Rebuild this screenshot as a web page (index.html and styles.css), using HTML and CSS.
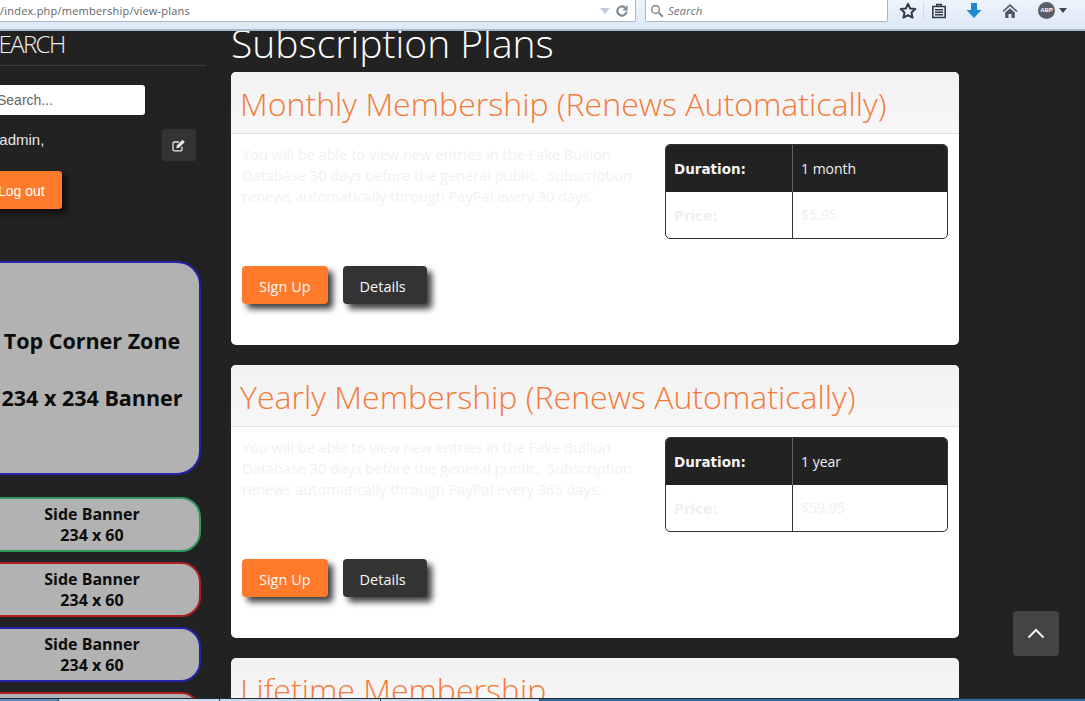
FILE: index.html
```html
<!DOCTYPE html>
<html lang="en">
<head>
<meta charset="utf-8">
<title>Subscription Plans</title>
<link rel="stylesheet" href="styles.css">
</head>
<body>
<header class="toolbar">
  <div class="urlbar">
    <span class="url">/index.php/membership/view-plans</span>
    <svg class="ico-drop" width="12" height="8" viewBox="0 0 12 8"><path d="M1 1h10L6 7z" fill="#c3cdd8"/></svg>
    <svg class="ico-reload" width="14" height="14" viewBox="0 0 14 14"><path d="M11.500 7.500A4.600 4.600 0 1 1 10 3.600" fill="none" stroke="#7d8a96" stroke-width="2.200"/><path d="M12.600 1v5.400H7.400z" fill="#7d8a96"/></svg>
  </div>
  <div class="searchbar">
    <svg width="14" height="14" viewBox="0 0 14 14"><circle cx="5.500" cy="5.500" r="3.900" fill="none" stroke="#8a929a" stroke-width="1.600"/><path d="M8.500 8.500l4.300 4.300" stroke="#8a929a" stroke-width="2.200"/></svg>
    <span class="search-label">Search</span>
  </div>
  <div class="tools">
    <svg class="tool-star" width="18" height="18" viewBox="0 0 18 18"><path d="M9 1.800l2.200 4.700 5.100.6-3.800 3.500 1 5.100L9 13.200l-4.500 2.500 1-5.100L1.700 7.100l5.100-.6z" fill="none" stroke="#2f3d4a" stroke-width="2" stroke-linejoin="round"/></svg>
    <span class="tool-sep"></span>
    <svg class="tool-list" width="16" height="16" viewBox="0 0 16 16"><path d="M1.800 3.500h12.400V14.500H1.800zM5.800 3.500V1.500h4.400v2" fill="none" stroke="#2f3d4a" stroke-width="1.600"/><path d="M4 6.800h8M4 9.300h8M4 11.800h8" stroke="#2f3d4a" stroke-width="1.400"/></svg>
    <svg class="tool-down" width="16" height="16" viewBox="0 0 16 16"><path d="M5 0h6v7h4.500L8 15 .5 7H5z" fill="#1b8ad3"/></svg>
    <svg class="tool-home" width="16" height="16" viewBox="0 0 16 16"><path d="M8 1L.5 8l1 1L8 3.200 14.500 9l1-1zM3.200 9.500L8 5.200l4.800 4.300V15H9.500v-4h-3v4H3.200z" fill="#4d5964"/></svg>
    <div class="abp"><span class="abp-badge">ABP</span><svg width="8" height="5" viewBox="0 0 8 5"><path d="M0 0h8L4 5z" fill="#3c4a57"/></svg></div>
  </div>
</header>

<div class="page">
  <aside class="sidebar">
    <h3 class="side-title">SEARCH</h3>
    <input class="side-search" type="text" placeholder="Search...">
    <div class="user-row">
      <span class="hello">Hello admin,</span>
      <a class="edit-btn"><svg width="14" height="13" viewBox="0 0 14 13"><path d="M10 7.800V10.500a1.300 1.300 0 0 1-1.300 1.300H2.300A1.300 1.300 0 0 1 1 10.500V4.300A1.300 1.300 0 0 1 2.300 3H7" fill="none" stroke="#e6e6e6" stroke-width="1.300"/><path d="M4.800 6.500L10.500 .8l2.300 2.300-5.700 5.700-2.800.5z" fill="#e6e6e6"/></svg></a>
    </div>
    <a class="logout">Log out</a>
    <div class="banner banner-top banner-blue"><span>Top Corner Zone</span><span>234 x 234 Banner</span></div>
    <div class="banner banner-side banner-green"><span>Side Banner</span><span>234 x 60</span></div>
    <div class="banner banner-side banner-red"><span>Side Banner</span><span>234 x 60</span></div>
    <div class="banner banner-side banner-blue"><span>Side Banner</span><span>234 x 60</span></div>
    <div class="banner banner-side banner-red"><span>Side Banner</span><span>234 x 60</span></div>
  </aside>

  <main class="content">
    <h1 class="page-title">Subscription Plans</h1>

    <section class="plan">
      <h2 class="plan-title">Monthly Membership (Renews Automatically)</h2>
      <div class="plan-body">
        <div class="plan-top">
          <p class="plan-text">You will be able to view new entries in the Fake Bullion Database 30 days before the general public.&nbsp; Subscription renews automatically through PayPal every 30 days.</p>
          <table class="plan-table">
            <tr class="row-dark"><th>Duration:</th><td>1 month</td></tr>
            <tr><th>Price:</th><td>$5.95</td></tr>
          </table>
        </div>
        <div class="plan-actions"><a class="btn btn-orange">Sign Up</a><a class="btn btn-dark">Details</a></div>
      </div>
    </section>

    <section class="plan">
      <h2 class="plan-title">Yearly Membership (Renews Automatically)</h2>
      <div class="plan-body">
        <div class="plan-top">
          <p class="plan-text">You will be able to view new entries in the Fake Bullion Database 30 days before the general public.&nbsp; Subscription renews automatically through PayPal every 365 days.</p>
          <table class="plan-table">
            <tr class="row-dark"><th>Duration:</th><td>1 year</td></tr>
            <tr><th>Price:</th><td>$59.95</td></tr>
          </table>
        </div>
        <div class="plan-actions"><a class="btn btn-orange">Sign Up</a><a class="btn btn-dark">Details</a></div>
      </div>
    </section>

    <section class="plan">
      <h2 class="plan-title">Lifetime Membership</h2>
    </section>
  </main>
</div>

<a class="to-top"><svg width="18" height="11" viewBox="0 0 18 11"><path d="M1.500 9.500L9 2l7.500 7.500" fill="none" stroke="#f2f2f2" stroke-width="2"/></svg></a>

<footer class="taskbar">
  <span class="task task-a"></span><span class="task task-b"></span><span class="task task-b"></span><span class="task task-c"></span><span class="task task-d"></span>
</footer>
</body>
</html>
```
FILE: styles.css
```css
* { box-sizing: border-box; }
html, body { margin: 0; height: 701px; overflow: hidden; }
body { background: #222; display: flex; flex-direction: column; font-family: "Open Sans", sans-serif; color: #f2f2f2; position: relative; }

/* Browser chrome */
.toolbar { height: 31px; flex: none; display: flex; align-items: flex-start; background: linear-gradient(#eef4fb, #dce8f6); border-bottom: 2px solid #a8b8c9; }
.urlbar { width: 636px; height: 22px; background: #fff; border-right: 1px solid #a9b9ca; border-bottom: 1px solid #a9b9ca; border-radius: 0 0 2px 0; display: flex; align-items: center; padding: 0 6px 0 0; }
.url { flex: 1; font-size: 11px; color: #5f6467; letter-spacing: .22px; }
.ico-drop { margin-right: 4px; }
.searchbar { width: 243px; height: 22px; margin-left: 9px; background: #fff; border: 1px solid #a9b9ca; border-top: 0; border-radius: 0 0 2px 2px; display: flex; align-items: center; gap: 4px; padding-left: 4px; }
.search-label { font-size: 11.500px; font-style: italic; color: #70767c; }
.tools { flex: 1; height: 21px; display: flex; align-items: center; padding-left: 11px; }
.tool-sep { width: 1px; height: 18px; margin-left: 6px; background: #cfdbe8; }
.tool-list { margin-left: 7px; }
.tool-down { margin-left: 19px; }
.tool-home { margin-left: 20px; }
.abp { display: flex; align-items: center; gap: 4px; margin-left: 20px; }
.abp-badge { width: 17px; height: 17px; border-radius: 50%; background: #595f66; color: #fff; font-family: "Liberation Sans", sans-serif; font-weight: 700; font-size: 6px; line-height: 17px; text-align: center; }

/* Page columns */
.page { flex: 1; min-height: 0; display: flex; align-items: flex-start; overflow: hidden; }
.sidebar { width: 231px; flex: none; overflow: hidden; height: 100%; }
.content { width: 728px; flex: none; }

/* Sidebar */
.side-title { margin: 0 0 0 -13px; width: 219px; height: 35px; border-bottom: 1px solid #3f3f3f; font-size: 24px; line-height: 26px; font-weight: 300; letter-spacing: -1.600px; color: #f0f0f0; }
.side-search { display: block; width: 165px; height: 30px; margin: 19px 0 0 -20px; padding: 0 17px; border: 0; border-radius: 3px; background: #fff; font-family: "Liberation Sans", sans-serif; font-size: 14px; }
.side-search::placeholder { color: #666; opacity: 1; }
.user-row { display: flex; width: 196px; height: 32px; margin-top: 14px; justify-content: space-between; }
.hello { margin-left: -39px; font-family: "Liberation Sans", sans-serif; font-size: 15px; line-height: 22px; color: #e8e8e8; white-space: nowrap; }
.edit-btn { width: 34px; height: 32px; background: #333; border-radius: 3px; display: flex; align-items: center; justify-content: center; }
.logout { display: block; width: 90px; height: 38px; margin: 10px 0 0 -28px; padding-left: 26px; background: #ff7a2b; border-radius: 3px; font-family: "Liberation Sans", sans-serif; font-size: 14px; line-height: 40px; color: #fff; box-shadow: 4px 4px 6px rgba(0,0,0,.7); }
.banner { width: 242px; margin-left: -41px; padding-left: 24px; background: #b2b2b2; border: 2px solid; color: #0c0c0c; font-family: "Open Sans", sans-serif; font-weight: 700; display: flex; flex-direction: column; align-items: center; }
.banner-top { height: 214px; margin-top: 52px; border-radius: 24px; font-size: 21.500px; justify-content: center; gap: 24px; line-height: 33px; padding-top: 2px; }
.banner-side { height: 55px; margin-top: 10px; border-radius: 20px; font-size: 16px; line-height: 21px; justify-content: center; }
.banner-top + .banner-side { margin-top: 22px; }
.banner-blue { border-color: #2222aa; }
.banner-green { border-color: #2f9a5c; }
.banner-red { border-color: #b01f1f; }

/* Plans */
.page-title { margin: -6px 0 0; height: 47px; font-size: 39px; line-height: 36px; font-weight: 300; color: #fff; white-space: nowrap; }
.plan { background: #fff; border-radius: 5px; margin-bottom: 20px; overflow: hidden; }
.plan-title { margin: 0; height: 62px; padding: 0 9px; background: linear-gradient(#f2f2f2, #f7f7f7); border-bottom: 1px solid #e2e2e2; font-size: 32.100px; line-height: 64px; font-weight: 300; color: #f47a3a; white-space: nowrap; }
.plan-body { height: 211px; padding: 10px 11px 0 11px; display: flex; flex-direction: column; }
.plan-top { display: flex; justify-content: space-between; align-items: flex-start; height: 122px; }
.plan-text { width: 400px; margin: 0; font-size: 14.570px; line-height: 21px; color: #f1f1f1; }
.plan-table { width: 283px; height: 95px; border-collapse: separate; border-spacing: 0; border: 1px solid #333; border-radius: 5px; overflow: hidden; font-size: 14px; }
.plan-table th { width: 127px; padding: 2px 8px 0; text-align: left; font-family: "DejaVu Sans", sans-serif; font-size: 13.500px; font-weight: 700; color: #f0f0f0; border-right: 1px solid #333; }
.plan-table td { padding: 0 8px; color: #f0f0f0; }
.row-dark { background: #222; }
.row-dark th { color: #f5f5f5; border-right-color: #666; }
.plan-actions { display: flex; gap: 15px; }
.btn { display: block; height: 38px; padding: 0 17px; border-radius: 4px; font-size: 14.500px; line-height: 41px; color: #f7f7f7; box-shadow: 5px 5px 6px rgba(0,0,0,.75); }
.btn-orange { background: #ff7a2b; }
.btn-dark { background: #333; padding-right: 21px; }

/* Overlay */
.to-top { position: absolute; left: 1013px; top: 611px; width: 46px; height: 45px; background: #444; border-radius: 4px; display: flex; align-items: center; justify-content: center; }

/* OS taskbar peeking in at the bottom */
.taskbar { position: absolute; left: 0; right: 0; bottom: 0; height: 3px; display: flex; border-top: 1px solid #1c2c3c; }
.task { height: 2px; }
.task-a { width: 58px; background: #5d8fb8; }
.task-b { width: 161px; background: #c9dbea; border-left: 1px solid #2e4a63; }
.task-c { width: 160px; background: #c9dbea; border-left: 1px solid #2e4a63; border-right: 1px solid #2e4a63; }
.task-d { flex: 1; background: #35699a; }
```
